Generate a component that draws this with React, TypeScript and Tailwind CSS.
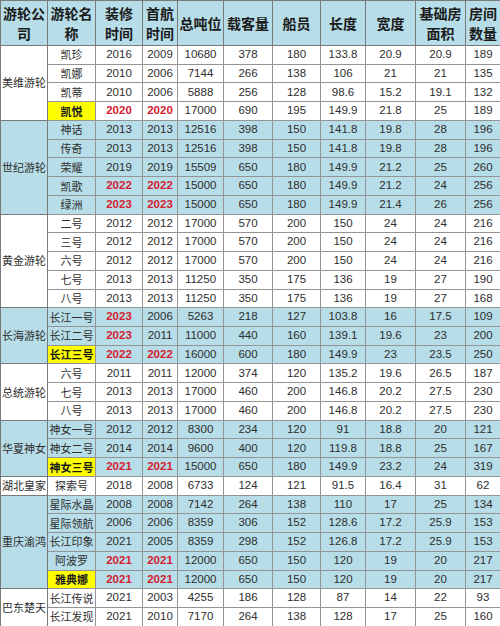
type Row = [string, string, string, string, string, string, string, string, string, string];

type Group = {
  company: string;
  blue: boolean;
  rows: Row[];
  // names shown with yellow highlight
  hl?: string[];
};

// years shown in bold red: "r" suffix
const groups: Group[] = [
  {
    company: "美维游轮",
    blue: false,
    hl: ["凯悦"],
    rows: [
      ["凯珍", "2016", "2009", "10680", "378", "180", "133.8", "20.9", "20.9", "189"],
      ["凯娜", "2010", "2006", "7144", "266", "138", "106", "21", "21", "135"],
      ["凯蒂", "2010", "2006", "5888", "256", "128", "98.6", "15.2", "19.1", "132"],
      ["凯悦", "2020r", "2020r", "17000", "690", "195", "149.9", "21.8", "25", "189"],
    ],
  },
  {
    company: "世纪游轮",
    blue: true,
    rows: [
      ["神话", "2013", "2013", "12516", "398", "150", "141.8", "19.8", "28", "196"],
      ["传奇", "2013", "2013", "12516", "398", "150", "141.8", "19.8", "28", "196"],
      ["荣耀", "2019", "2019", "15509", "650", "180", "149.9", "21.2", "25", "260"],
      ["凯歌", "2022r", "2022r", "15000", "650", "180", "149.9", "21.2", "24", "256"],
      ["绿洲", "2023r", "2023r", "15000", "650", "180", "149.9", "21.4", "26", "256"],
    ],
  },
  {
    company: "黄金游轮",
    blue: false,
    rows: [
      ["二号", "2012", "2012", "17000", "570", "200", "150", "24", "24", "216"],
      ["三号", "2012", "2012", "17000", "570", "200", "150", "24", "24", "216"],
      ["六号", "2012", "2012", "17000", "570", "200", "150", "24", "24", "216"],
      ["七号", "2013", "2013", "11250", "350", "175", "136", "19", "27", "190"],
      ["八号", "2013", "2013", "11250", "350", "175", "136", "19", "27", "168"],
    ],
  },
  {
    company: "长海游轮",
    blue: true,
    hl: ["长江三号"],
    rows: [
      ["长江一号", "2023r", "2006", "5263", "218", "127", "103.8", "16", "17.5", "109"],
      ["长江二号", "2023r", "2011", "11000", "440", "160", "139.1", "19.6", "23", "200"],
      ["长江三号", "2022r", "2022r", "16000", "600", "180", "149.9", "23", "23.5", "250"],
    ],
  },
  {
    company: "总统游轮",
    blue: false,
    rows: [
      ["六号", "2011", "2011", "12000", "374", "120", "135.2", "19.6", "26.5", "187"],
      ["七号", "2013", "2013", "17000", "460", "200", "146.8", "20.2", "27.5", "230"],
      ["八号", "2013", "2013", "17000", "460", "200", "146.8", "20.2", "27.5", "230"],
    ],
  },
  {
    company: "华夏神女",
    blue: true,
    hl: ["神女三号"],
    rows: [
      ["神女一号", "2012", "2012", "8300", "234", "120", "91", "18.8", "20", "121"],
      ["神女二号", "2014", "2014", "9600", "400", "120", "119.8", "18.8", "25", "167"],
      ["神女三号", "2021r", "2021r", "15000", "650", "180", "149.9", "23.2", "24", "319"],
    ],
  },
  {
    company: "湖北皇家",
    blue: false,
    rows: [["探索号", "2018", "2008", "6733", "124", "121", "91.5", "16.4", "31", "62"]],
  },
  {
    company: "重庆渝鸿",
    blue: true,
    hl: ["雅典娜"],
    rows: [
      ["星际水晶", "2008", "2008", "7142", "264", "138", "110", "17", "25", "134"],
      ["星际领航", "2006", "2006", "8359", "306", "152", "128.6", "17.2", "25.9", "153"],
      ["长江印象", "2021", "2005", "8359", "298", "152", "126.8", "17.2", "25.9", "153"],
      ["阿波罗", "2021r", "2021r", "12000", "650", "150", "120", "19", "20", "217"],
      ["雅典娜", "2021r", "2021r", "12000", "650", "150", "120", "19", "20", "217"],
    ],
  },
  {
    company: "巴东楚天",
    blue: false,
    rows: [
      ["长江传说", "2021", "2003", "4255", "186", "128", "87", "14", "22", "93"],
      ["长江发现", "2021", "2010", "7170", "264", "138", "128", "17", "25", "160"],
    ],
  },
];

const widths = [47, 48, 47, 35, 46, 49, 48, 45, 50, 50, 35];

const headers: React.ReactNode[] = [
  <>游轮公<br />司</>,
  <>游轮名<br />称</>,
  <>装修<br />时间</>,
  <>首航<br />时间</>,
  "总吨位",
  "载客量",
  "船员",
  "长度",
  "宽度",
  <>基础房<br />面积</>,
  <>房间<br />数量</>,
];

const cjk = "font-['Noto_Sans_CJK_SC',sans-serif]";
const num = "font-['Liberation_Sans','Noto_Sans_CJK_SC',sans-serif]";

export default function App() {
  return (
    <div className="w-[500px] h-[626px] overflow-hidden bg-white">
      <table className="w-[500px] table-fixed border-collapse text-[#2e2e2e]">
        <colgroup>
          {widths.map((w, i) => (
            <col key={i} style={{ width: w }} />
          ))}
        </colgroup>
        <thead>
          <tr className="h-[45px] bg-[#b7dde8]">
            {headers.map((h, i) => (
              <th
                key={i}
                className={`${cjk} p-0 border border-[#7a7a7a] text-[14px] leading-[20px] font-bold text-[#1a1a1a] text-center align-middle`}
              >
                {h}
              </th>
            ))}
          </tr>
        </thead>
        <tbody>
          {groups.map((g) =>
            g.rows.map((r, ri) => (
              <tr key={g.company + ri} className={`h-[18.74px] ${g.blue ? "bg-[#b7dde8]" : "bg-white"}`}>
                {ri === 0 && (
                  <td
                    rowSpan={g.rows.length}
                    className={`${cjk} p-0 border border-[#7a7a7a] text-[11px] leading-none text-center align-middle whitespace-nowrap`}
                  >
                    {g.company}
                  </td>
                )}
                {r.map((c, ci) => {
                  if (ci === 0) {
                    const hl = g.hl?.includes(c);
                    return (
                      <td
                        key={ci}
                        className={`${cjk} p-0 border border-[#949494] text-[11px] leading-none text-center whitespace-nowrap ${
                          hl ? "bg-[#ffff00] font-bold text-[#1a1a1a]" : ""
                        }`}
                      >
                        {c}
                      </td>
                    );
                  }
                  const red = c.endsWith("r");
                  return (
                    <td
                      key={ci}
                      className={`${num} p-0 border border-[#949494] text-[11.5px] leading-none text-center whitespace-nowrap ${
                        red ? "font-bold text-[#d42030]" : ""
                      }`}
                    >
                      {red ? c.slice(0, -1) : c}
                    </td>
                  );
                })}
              </tr>
            ))
          )}
        </tbody>
      </table>
    </div>
  );
}
